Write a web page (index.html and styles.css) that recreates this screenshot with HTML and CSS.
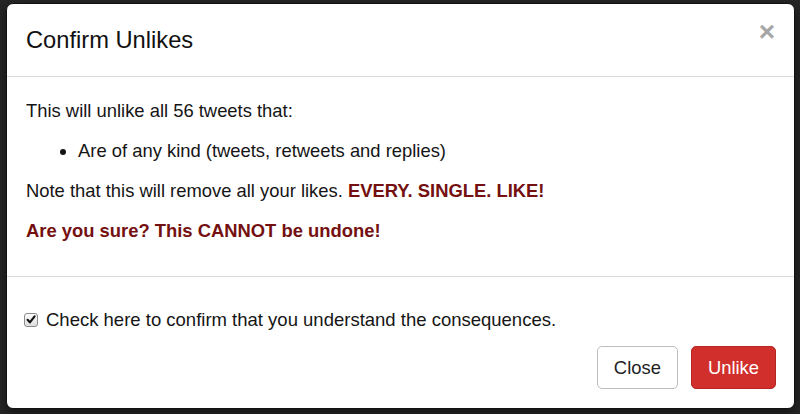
FILE: index.html
```html
<!DOCTYPE html>
<html lang="en">
<head>
<meta charset="utf-8">
<title>Confirm Unlikes</title>
<link rel="stylesheet" href="styles.css">
</head>
<body>
<div class="backdrop">
  <div class="modal">
    <div class="modal-header">
      <h4 class="modal-title">Confirm Unlikes</h4>
      <button class="close" type="button">×</button>
    </div>
    <div class="modal-body">
      <p>This will unlike all 56 tweets that:</p>
      <ul>
        <li>Are of any kind (tweets, retweets and replies)</li>
      </ul>
      <p>Note that this will remove all your likes. <strong class="warn">EVERY. SINGLE. LIKE!</strong></p>
      <p><strong class="warn">Are you sure? This CANNOT be undone!</strong></p>
    </div>
    <div class="modal-footer">
      <label class="confirm">
        <span class="checkbox"><svg viewBox="0 0 13 13" width="13" height="13"><path d="M2.8 6.8 L5.3 9.6 L10.4 3.2" fill="none" stroke="#111" stroke-width="2.3" stroke-linecap="round" stroke-linejoin="round"/></svg></span>
        Check here to confirm that you understand the consequences.
      </label>
      <div class="actions">
        <button class="btn btn-default" type="button">Close</button>
        <button class="btn btn-danger" type="button">Unlike</button>
      </div>
    </div>
  </div>
</div>
</body>
</html>
```

FILE: styles.css
```css
html, body {
  margin: 0;
  padding: 0;
}

body {
  width: 800px;
  height: 414px;
  overflow: hidden;
  background: #262626;
  font-family: "Liberation Sans", Arial, sans-serif;
  color: #151515;
}

.backdrop {
  padding: 3px 5px 0 6px;
}

.modal {
  width: 787px;
  background: #fff;
  border: 1px solid #111;
  border-radius: 7px;
  box-shadow: 0 4px 12px rgba(0, 0, 0, 0.5);
}

.modal-header {
  display: flex;
  justify-content: space-between;
  align-items: flex-start;
  padding: 19px 19px 19px 19px;
  border-bottom: 1px solid #dcdcdc;
}

.modal-title {
  margin: 0;
  font-size: 23.7px;
  line-height: 34px;
  font-weight: normal;
  color: #111;
}

.close {
  margin: -8px 0 0 0;
  padding: 0;
  border: 0;
  background: transparent;
  font-family: "Liberation Sans", Arial, sans-serif;
  font-size: 28px;
  font-weight: bold;
  line-height: 34px;
  color: #a6a6a6;
  cursor: pointer;
}

.modal-body {
  padding: 20px 19px 19px 19px;
  font-size: 18.4px;
  line-height: 27px;
}

.modal-body p {
  margin: 0 0 13px;
}

.modal-body ul {
  margin: 0 0 13px;
  padding-left: 52px;
}

.warn {
  color: #741010;
  font-weight: bold;
}

.modal-footer {
  padding: 20px 18px 19px 19px;
  border-top: 1px solid #dcdcdc;
}

.confirm {
  display: flex;
  align-items: center;
  gap: 8px;
  margin-top: 9px;
  margin-left: -2px;
  font-size: 18.5px;
  line-height: 27px;
  color: #151515;
}

.checkbox {
  display: inline-flex;
  box-sizing: border-box;
  width: 14px;
  height: 14px;
  border: 1px solid #8a8a8a;
  border-radius: 3px;
  background: linear-gradient(#fafafa, #dedede);
  align-items: center;
  justify-content: center;
}

.checkbox svg {
  display: block;
}

.actions {
  display: flex;
  justify-content: flex-end;
  gap: 13px;
  margin-top: 13px;
}

.btn {
  box-sizing: border-box;
  height: 43px;
  padding: 0 16px;
  border-radius: 5px;
  font-family: "Liberation Sans", Arial, sans-serif;
  font-size: 18.4px;
  line-height: 41px;
  cursor: pointer;
}

.btn-default {
  background: #fff;
  border: 1px solid #bdbdbd;
  color: #222;
}

.btn-danger {
  background: #d12f2b;
  border: 1px solid #b52622;
  color: #fff;
}
```
